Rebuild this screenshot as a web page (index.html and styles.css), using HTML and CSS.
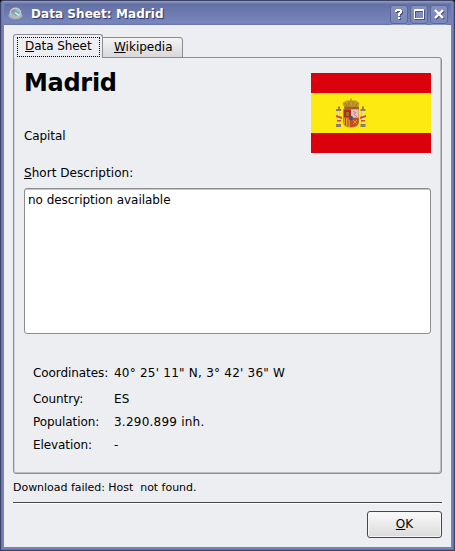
FILE: index.html
```html
<!DOCTYPE html>
<html lang="en">
<head>
<meta charset="utf-8">
<title>Data Sheet: Madrid</title>
<link rel="stylesheet" href="styles.css">
</head>
<body>
<div class="window">
  <header class="titlebar">
    <svg class="app-icon" width="16" height="16" viewBox="0 0 16 16">
      <ellipse cx="8.5" cy="11" rx="6.5" ry="3.2" fill="#777f91"/>
      <ellipse cx="7.5" cy="9.5" rx="7" ry="4" fill="#a9b0b5"/>
      <ellipse cx="7.5" cy="6.5" rx="5.8" ry="5" fill="#c3c9cc"/>
      <ellipse cx="7.2" cy="6.8" rx="4.3" ry="3.7" fill="#79aebb"/>
      <path d="M4 4.5l4 2.2" stroke="#c48180" stroke-width="1.5"/>
      <path d="M7 6.5l4 3" stroke="#e8f3f5" stroke-width="1.5"/>
      <path d="M8 3.5l3 2M3 8l4 2" stroke="#a3c9cf"/>
    </svg>
    <h1 class="title">Data Sheet: Madrid</h1>
    <div class="controls">
      <button class="control" aria-label="Help"><svg width="16" height="17" viewBox="0 0 16 17"><path d="M4 4h1V3h5v1h1v3h-1v1H9v2H7V7h1V6h1V5H6v1H4zM7 11h2v2H7z" fill="#fff"/></svg></button>
      <button class="control" aria-label="Maximize"><svg width="16" height="17" viewBox="0 0 16 17"><path d="M3 3h10v10H3zM4 5v7h8V5z" fill="#fff" fill-rule="evenodd"/></svg></button>
      <button class="control" aria-label="Close"><svg width="16" height="17" viewBox="0 0 16 17"><path d="M4 4l8 8M12 4l-8 8" stroke="#fff" stroke-width="2.400"/></svg></button>
    </div>
  </header>
  <main class="content">
    <nav class="tabs">
      <a class="tab active"><span class="focus"><u>D</u>ata Sheet</span></a>
      <a class="tab inactive"><u>W</u>ikipedia</a>
    </nav>
    <section class="panel">
      <div class="summary">
        <div>
          <h2 class="name">Madrid</h2>
          <p class="role">Capital</p>
        </div>
        <svg class="flag" width="120" height="80" viewBox="0 0 120 80">
          <path fill="#da000c" d="M0 0h120v80H0z"/>
          <path fill="#fcea10" d="M0 20h120v40H0z"/>
          <path fill="#d6c75c" d="M26 36h3v18h-3zM50 36h3v18h-3z"/>
          <path fill="#e3dcc3" d="M26.500 38h2v13h-2zM51 38h2v13h-2z"/>
          <path fill="#8d7e63" d="M25 36h5v2h-5zM25 51h5v3h-5zM49.500 36h5v2h-5zM49.500 51h5v3h-5z"/>
          <path fill="#a8792e" d="M27 33.500h2v2.500h-2zM51 33.500h2v2.500h-2z"/>
          <path fill="#cf4b36" d="M25 42l6 2v2l-6-2zM55 42l-6 2v2l6-2zM26 47h4v1.500h-4zM50 47h4v1.500h-4z"/>
          <path d="M33 34Q30 29 34 28.500Q37 26.500 40 28Q44 26.500 46.500 28.500Q50 30 47 34z" fill="#c59a28"/>
          <path d="M33.500 34h14v2H34zM34 30l2 3M38 28.500v4M42 28.500v4M46.500 30l-2 3M40 25.500v3" fill="#ba4b25" stroke="#967026" stroke-width="1"/>
          <path d="M32 36h16v13q0 5.500-8 5.500T32 49z" fill="#b98a35"/>
          <path d="M33 36.500h7v8h-7z" fill="#b72622"/>
          <path d="M40 36.500h7.500v8H40z" fill="#e9c4bb"/>
          <path d="M33 45h7v9q-7-.5-7-5z" fill="#e4a52a"/>
          <path d="M34.500 45v7M37 45v8M39.300 45v9" stroke="#bd3722"/>
          <path d="M40 45h7.500v4q0 4.500-7.500 5z" fill="#c64a20"/>
          <path d="M35 39h3v4h-3z" fill="#9a702b"/>
          <path d="M42 38.500l3 1-2 2 3 2" fill="none" stroke="#d3738d"/>
          <path d="M42 47l4 4M46 47l-4 4" stroke="#d99b28"/>
          <ellipse cx="40" cy="45" rx="2" ry="2.500" fill="#385b72"/>
        </svg>
      </div>
      <p class="label"><u>S</u>hort Description:</p>
      <div class="description">no description available</div>
      <dl class="facts">
        <dt>Coordinates:</dt><dd>40° 25' 11" N, 3° 42' 36" W</dd>
        <dt>Country:</dt><dd>ES</dd>
        <dt>Population:</dt><dd>3.290.899 inh.</dd>
        <dt>Elevation:</dt><dd>-</dd>
      </dl>
    </section>
    <p class="status">Download failed: Host&nbsp; not found.</p>
    <footer class="actions"><button class="ok"><u>O</u>K</button></footer>
  </main>
</div>
</body>
</html>
```

FILE: styles.css
```css
* { box-sizing: border-box; }
body, h1, h2, p, dl, dd { margin: 0; }
body {
  background: #000;
  color: #000;
  font: 12px/14px "DejaVu Sans", sans-serif;
}
u {
  text-decoration: underline;
  text-underline-offset: 1px;
  text-decoration-thickness: 1px;
  text-decoration-skip-ink: none;
}
button { font: inherit; padding: 0; }
.window {
  width: 455px;
  height: 551px;
  padding: 0 3px 3px;
  border: 1px solid #3d4467;
  border-radius: 3px 3px 0 0;
  background: #7583bb;
  box-shadow: inset 0 1px #8690b8, inset 1px 0 #6673a7, inset -1px -1px #6470a5;
}
.titlebar {
  display: flex;
  align-items: center;
  height: 24px;
  padding: 2px 3px 0 4px;
  background: linear-gradient(#8b94bb 0, #8b94bb 1px, #6270a4 3px, #7886bd 22px, #6573aa 24px);
}
.app-icon { margin-bottom: 1px; }
.title {
  flex: 1;
  margin-left: 7px;
  color: #fff;
  font-size: 12px;
  line-height: 16px;
  letter-spacing: .06px;
  text-shadow: 1px 1px 1px #2c3560;
}
.controls { display: flex; gap: 2px; }
.control {
  display: block;
  width: 18px;
  height: 19px;
  border: 1px solid #5b679a;
  border-radius: 3px;
  background: linear-gradient(#8590bd, #7b87b9);
  box-shadow: 0 1px #8995c4;
}
.control svg { display: block; filter: drop-shadow(1px 1px 0 #48527e); }
.content {
  height: 522px;
  padding: 9px 9px 10px 9px;
  background: #edeef2;
}
.tabs { display: flex; align-items: flex-end; height: 23px; }
.tab { border: 1px solid #8b8d90; }
.active {
  position: relative;
  z-index: 1;
  width: 90px;
  height: 24px;
  margin-bottom: -1px;
  padding: 2px;
  border-bottom: 0;
  border-radius: 3px 3px 0 0;
  background: #edeef2;
}
.focus {
  display: block;
  width: 83px;
  height: 20px;
  margin-left: 1px;
  padding: 1px 0 0 7px;
  border: 1px dotted #000;
  line-height: 15px;
  letter-spacing: -.06px;
  white-space: nowrap;
}
.inactive {
  width: 81px;
  height: 21px;
  margin: 0 0 -1px -1px;
  padding: 2px 0 0 11px;
  border-radius: 0 3px 0 0;
  background: linear-gradient(#f4f4f5, #d8d8da);
}
.panel {
  height: 417px;
  padding: 15px 10px 0;
  border: 1px solid #8b8d90;
  border-radius: 0 3px 3px 3px;
  box-shadow: inset -1px -1px #bfc0c3, inset 1px 0 #d2d3d6;
}
.summary { display: flex; justify-content: space-between; height: 80px; }
.name { font-size: 24px; line-height: 28px; letter-spacing: -.3px; margin-top: -4px; }
.role { margin-top: 32px; letter-spacing: -.1px; }
.label { margin-top: 13px; letter-spacing: .05px; }
.description {
  height: 146px;
  margin-top: 8px;
  padding: 4px 3px;
  border: 1px solid #8b8d90;
  border-radius: 3px;
  background: #fff;
  box-shadow: inset 0 1px #c5c6c8;
  letter-spacing: -.04px;
}
.facts {
  display: grid;
  grid-template-columns: 81px 1fr;
  grid-template-rows: 26px 23px 23px 23px;
  margin: 32px 0 0 9px;
}
.facts dt { letter-spacing: -.08px; }
.facts dd { letter-spacing: .23px; }
.status { margin-top: 7px; font-size: 11px; letter-spacing: -.03px; }
.actions {
  display: flex;
  justify-content: flex-end;
  margin-top: 7px;
  padding-top: 8px;
  border-top: 1px solid #46464b;
  box-shadow: inset 0 1px #fff;
}
.ok {
  width: 75px;
  height: 27px;
  padding-bottom: 1px;
  border: 1px solid #47474a;
  border-radius: 3px;
  background: linear-gradient(#fafafb, #dadadb);
  color: #000;
  box-shadow: inset 0 0 0 1px #f5f5f6;
}
```
